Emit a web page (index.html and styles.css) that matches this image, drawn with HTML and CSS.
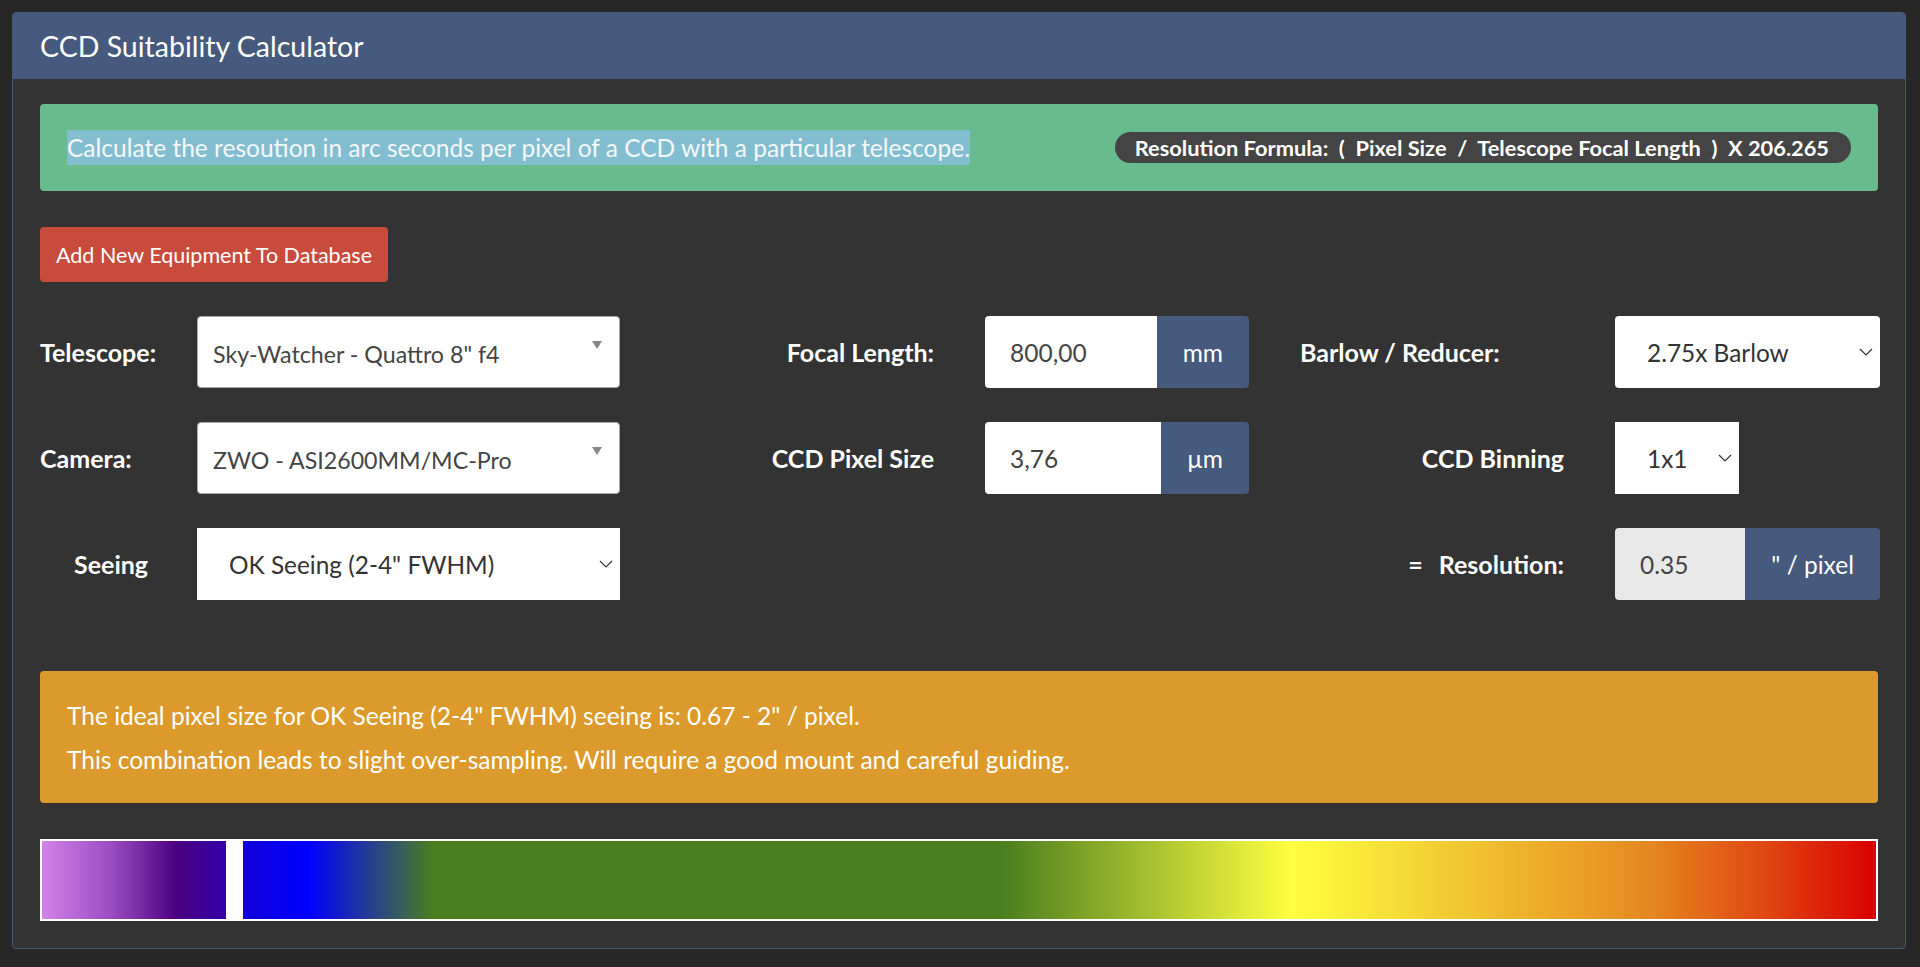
FILE: index.html
```html
<!DOCTYPE html>
<html lang="en">
<head>
  <meta charset="UTF-8" />
  <meta name="viewport" content="width=device-width, initial-scale=1.0" />
  <title>CCD Suitability Calculator</title>
  <link rel="stylesheet" href="styles.css">
</head>
<body>
  <div class="panel">
    <div class="panel-heading">
      <h3>CCD Suitability Calculator</h3>
    </div>

    <div class="panel-body">
      <div class="alert alert-success">
        <span class="intro">Calculate the resoution in arc seconds per pixel of a CCD with a particular telescope.</span>
        <span class="badge">Resolution Formula:&nbsp; (&nbsp; Pixel Size &nbsp;/&nbsp; Telescope Focal Length &nbsp;)&nbsp; X 206.265</span>
      </div>

      <button class="btn btn-danger" type="button">Add New Equipment To Database</button>

      <div class="calc-grid">
        <label class="lbl">Telescope:</label>
        <div class="combo">
          <span class="combo-text">Sky-Watcher - Quattro 8" f4</span>
          <span class="combo-arrow"></span>
        </div>
        <label class="lbl lbl-right">Focal Length:</label>
        <div class="input-group">
          <input class="field" type="text" value="800,00">
          <span class="addon">mm</span>
        </div>
        <label class="lbl lbl-left">Barlow / Reducer:</label>
        <div class="picker rounded">
          <span class="picker-text">2.75x Barlow</span>
          <svg class="chev" width="14" height="8" viewBox="0 0 14 8"><path d="M1 1l6 6 6-6" fill="none" stroke="#333" stroke-width="1.2"/></svg>
        </div>

        <label class="lbl">Camera:</label>
        <div class="combo">
          <span class="combo-text">ZWO - ASI2600MM/MC-Pro</span>
          <span class="combo-arrow"></span>
        </div>
        <label class="lbl lbl-right">CCD Pixel Size</label>
        <div class="input-group">
          <input class="field" type="text" value="3,76">
          <span class="addon">µm</span>
        </div>
        <label class="lbl lbl-right">CCD Binning</label>
        <div class="picker narrow">
          <span class="picker-text">1x1</span>
          <svg class="chev" width="14" height="8" viewBox="0 0 14 8"><path d="M1 1l6 6 6-6" fill="none" stroke="#333" stroke-width="1.2"/></svg>
        </div>

        <label class="lbl lbl-seeing">Seeing</label>
        <div class="picker">
          <span class="picker-text">OK Seeing (2-4" FWHM)</span>
          <svg class="chev" width="14" height="8" viewBox="0 0 14 8"><path d="M1 1l6 6 6-6" fill="none" stroke="#333" stroke-width="1.2"/></svg>
        </div>
        <div></div>
        <div></div>
        <label class="lbl lbl-right"><span class="eq">=</span>Resolution:</label>
        <div class="input-group">
          <input class="field readonly" type="text" value="0.35" readonly>
          <span class="addon">" / pixel</span>
        </div>
      </div>

      <div class="alert alert-warning">
        <p>The ideal pixel size for OK Seeing (2-4" FWHM) seeing is: 0.67 - 2" / pixel.</p>
        <p>This combination leads to slight over-sampling. Will require a good mount and careful guiding.</p>
      </div>

      <!-- sampling scale: under-sampled on the left, over-sampled on the right -->
      <div class="scale">
        <div class="scale-low"></div>
        <div class="scale-main"></div>
      </div>
    </div>
  </div>
</body>
</html>
```

FILE: styles.css
```css
body {
  font-family: 'Lato', 'Open Sans', sans-serif;
  background: #272727;
  margin: 0;
  padding: 12px 14px 0 12px;
}
.panel {
  background: #333333;
  border: 1px solid #46597a;
  border-radius: 4px;
  overflow: hidden;
}
.panel-heading {
  background: #455a7c;
  height: 66px;
  display: flex;
  align-items: center;
  padding: 0 27px;
}
.panel-heading h3 {
  margin: 0;
  color: #fff;
  font-size: 28.5px;
  font-weight: 400;
}
.panel-body {
  padding: 25px 27px 27px 27px;
}
.alert {
  border-radius: 4px;
  color: #fff;
  font-size: 24.5px;
}
.alert-success {
  background: #68bb8c;
  display: flex;
  align-items: center;
  justify-content: space-between;
  padding: 26px 27px;
  margin-bottom: 36px;
}
.intro {
  background: #83bdd0;
  color: #f4f8fb;
  line-height: 35px;
}
.badge {
  background: #444444;
  border-radius: 16px;
  font-size: 21.8px;
  font-weight: 700;
  height: 31px;
  line-height: 31px;
  padding: 0 22px 0 20px;
}
.btn {
  font-family: inherit;
  font-size: 21.5px;
  color: #fff;
  border: none;
  border-radius: 4px;
  height: 55px;
  padding: 0 16px;
  cursor: pointer;
}
.btn-danger {
  background: #c94b3c;
}
.calc-grid {
  display: grid;
  grid-template-columns: 157px 423px 365px 264px 366px 265px;
  grid-auto-rows: 72px;
  row-gap: 34px;
  align-items: center;
  margin-top: 34px;
  margin-bottom: 71px;
}
.lbl {
  color: #fff;
  font-size: 25px;
  font-weight: 700;
}
.lbl-right {
  text-align: right;
  padding-right: 51px;
}
.lbl-left {
  padding-left: 51px;
}
.lbl-seeing {
  padding-left: 34px;
}
.eq {
  margin-right: 16px;
}
.combo, .picker, .input-group {
  height: 72px;
  box-sizing: border-box;
}
.combo {
  background: #fff;
  border: 1px solid #aaa;
  border-radius: 4px;
  display: flex;
  padding: 0 17px 0 15px;
}
.combo-text {
  flex: 1;
  align-self: center;
  margin-top: 4px;
  color: #444;
  font-size: 23.2px;
}
.combo-arrow {
  margin-top: 24px;
  width: 0;
  height: 0;
  border-style: solid;
  border-width: 8px 5px 0 5px;
  border-color: #888 transparent transparent transparent;
}
.picker {
  background: #fff;
  display: flex;
  align-items: center;
  padding: 0 7px 0 32px;
}
.picker.rounded {
  border-radius: 4px;
}
.picker.narrow {
  width: 124px;
}
.picker-text {
  flex: 1;
  color: #333;
  font-size: 24.4px;
}
.chev {
  flex: none;
}
.input-group {
  display: flex;
}
.field {
  flex: 1;
  min-width: 0;
  border: none;
  border-radius: 4px 0 0 4px;
  padding: 0 0 0 25px;
  font-family: inherit;
  font-size: 24.5px;
  color: #444;
  background: #fff;
}
.field.readonly {
  background: #e9e9e9;
}
.addon {
  background: #455a7c;
  color: #fff;
  font-size: 24.5px;
  display: flex;
  align-items: center;
  padding: 0 26px;
  border-radius: 0 4px 4px 0;
}
.alert-warning {
  background: #dd9a2c;
  padding: 30px 27px 28px 27px;
  margin-bottom: 36px;
}
.alert-warning p {
  margin: 0 0 14px 0;
  line-height: 30px;
}
.alert-warning p:last-child {
  margin-bottom: 0;
}
.scale {
  display: flex;
  gap: 17px;
  height: 82px;
  box-sizing: border-box;
  padding: 2px;
  background: #fff;
}
.scale-low {
  width: 184px;
  background: linear-gradient(90deg, #d382e8 0%, #9a4cc0 38%, #4a0080 73%, #3500aa 100%);
}
.scale-main {
  flex: 1;
  background: linear-gradient(90deg, #1200d8 0%, #0000ff 4%, #4a7f1e 11.7%, #4a7f1e 46.5%, #ffff40 64.2%, #f0c530 75%, #e5891f 86%, #df4a12 93%, #db0000 100%);
}
```
